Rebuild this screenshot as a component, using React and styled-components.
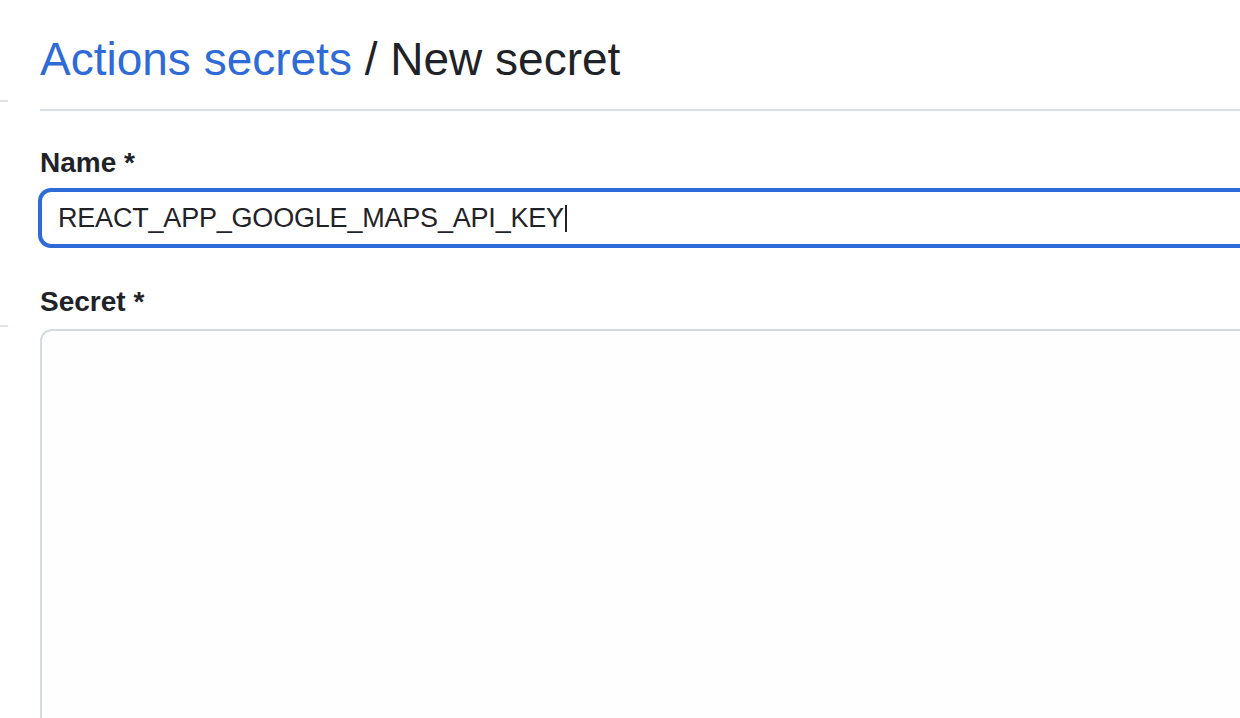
import styled, { createGlobalStyle } from 'styled-components';

const GlobalStyle = createGlobalStyle`
  html, body {
    margin: 0;
    padding: 0;
    background: #ffffff;
    overflow: hidden;
  }
  body {
    font-family: "Liberation Sans", Arial, Helvetica, sans-serif;
    color: #1f2328;
  }
`;

const Page = styled.div`
  display: flex;
  flex-direction: row;
  gap: 32px;
  width: 1240px;
  height: 718px;
  overflow: hidden;
`;

const Sidebar = styled.nav`
  width: 8px;
  flex-shrink: 0;
  display: flex;
  flex-direction: column;
  padding-top: 100px;
`;

const SideRule = styled.div`
  height: 2px;
  background: #dfe3e8;
  margin-top: ${props => props.$offset || 0}px;
`;

const Main = styled.main`
  flex: 1;
  min-width: 0;
  margin-right: -80px;
  padding-top: 31px;
  display: flex;
  flex-direction: column;
`;

const Header = styled.div`
  padding-bottom: 22px;
  border-bottom: 2px solid #d8dee4;
`;

const Title = styled.h1`
  margin: 0;
  font-size: 46px;
  line-height: 56px;
  font-weight: 400;
  color: #1f2328;
`;

const Crumb = styled.a`
  color: #2f6bd6;
  text-decoration: none;
`;

const Field = styled.div`
  display: flex;
  flex-direction: column;
  margin-top: ${props => props.$top}px;
`;

const Label = styled.label`
  font-size: 28px;
  line-height: 34px;
  font-weight: 700;
  color: #1f2328;
  margin-bottom: 10px;
`;

const TextInput = styled.div`
  box-sizing: border-box;
  height: 56px;
  border: 2px solid #2f6bd6;
  box-shadow: 0 0 0 2px #2f6bd6;
  border-radius: 11px;
  padding: 0 16px;
  display: flex;
  align-items: center;
  font-size: 27px;
  letter-spacing: -0.2px;
  color: #1f2328;
  background: #ffffff;
`;

const Caret = styled.span`
  display: inline-block;
  width: 2px;
  height: 27px;
  margin-left: 1px;
  background: #1f2328;
`;

const SecretArea = styled.textarea`
  box-sizing: border-box;
  height: 500px;
  border: 2px solid #d5dae0;
  border-radius: 12px;
  background: #fefefe;
  resize: none;
  outline: none;
  font-family: inherit;
  font-size: 27px;
`;

const App = () => {
  return (
    <>
      <GlobalStyle />
      <Page>
        <Sidebar>
          <SideRule />
          <SideRule $offset={223} />
        </Sidebar>
        <Main>
          <Header>
            <Title>
              <Crumb href="#">Actions secrets</Crumb> / New secret
            </Title>
          </Header>
          <Field $top={35}>
            <Label>Name *</Label>
            <TextInput>
              REACT_APP_GOOGLE_MAPS_API_KEY
              <Caret />
            </TextInput>
          </Field>
          <Field $top={39}>
            <Label>Secret *</Label>
            <SecretArea />
          </Field>
        </Main>
      </Page>
    </>
  );
};

export default App;
